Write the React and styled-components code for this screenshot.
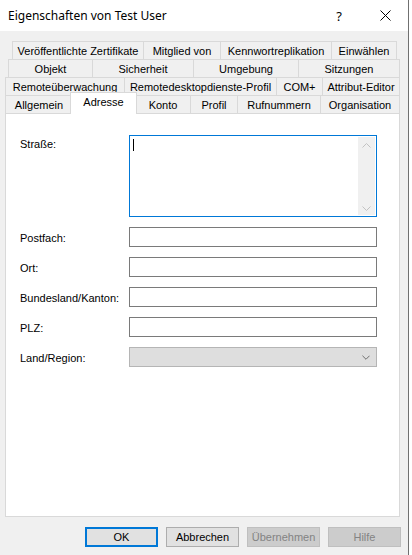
import React from "react";
import styled, { createGlobalStyle } from "styled-components";

const GlobalStyle = createGlobalStyle`
  html, body { margin: 0; padding: 0; background: #fff; }
  * { box-sizing: border-box; }
`;

const Window = styled.div`
  width: 409px;
  height: 555px;
  background: #f0f0f0;
  border-right: 1px solid #707070;
  display: flex;
  flex-direction: column;
  font-family: "Liberation Sans", Arial, sans-serif;
  font-size: 11px;
  color: #000;
  overflow: hidden;
`;

const TitleBar = styled.div`
  height: 31px;
  flex-shrink: 0;
  background: #fff;
  display: flex;
  align-items: center;
  padding-left: 8px;
`;

const Title = styled.div`
  flex: 1;
  font-family: "Noto Sans", "Open Sans", sans-serif;
  font-size: 12px;
`;

const CaptionButton = styled.div`
  width: 46px;
  height: 31px;
  display: flex;
  align-items: center;
  justify-content: center;
  font-family: "Noto Sans", sans-serif;
  font-size: 13px;
`;

const TabStrip = styled.div`
  margin-top: 10px;
  display: flex;
  flex-direction: column;
`;

const TabRow = styled.div`
  display: flex;
  align-items: flex-start;
  height: 18px;
  padding-left: ${(p) => p.$left}px;
`;

const Tab = styled.div`
  width: ${(p) => (p.$active ? p.$w + 4 : p.$w)}px;
  height: ${(p) => (p.$active ? 22 : 18)}px;
  margin: ${(p) => (p.$active ? "-3px -2px -1px" : "0")};
  border-top: 1px solid #d9d9d9;
  border-left: 1px solid #d9d9d9;
  border-right: ${(p) => (p.$active ? "1px solid #d9d9d9" : "none")};
  background: ${(p) => (p.$active ? "#fff" : "#f0f0f0")};
  position: relative;
  z-index: ${(p) => (p.$active ? 2 : 0)};
  display: flex;
  align-items: center;
  justify-content: center;
  padding-bottom: ${(p) => (p.$active ? 4 : 0)}px;
  white-space: nowrap;

  &:last-child {
    border-right: 1px solid #d9d9d9;
  }
`;

const Panel = styled.div`
  margin-left: 5px;
  width: 395px;
  height: 404px;
  flex-shrink: 0;
  background: #fff;
  border: 1px solid #d9d9d9;
  padding: 21px 0 0 14px;
`;

const Form = styled.div`
  display: grid;
  grid-template-columns: 109px 248px;
  row-gap: 10px;
  align-items: center;
`;

const Label = styled.div`
  align-self: ${(p) => (p.$top ? "start" : "center")};
  padding-top: ${(p) => (p.$top ? 3 : 1)}px;
`;

const TextArea = styled.div`
  height: 82px;
  border: 1px solid #0078d7;
  display: flex;
  padding: 1px;
`;

const TextBody = styled.div`
  flex: 1;
  padding: 2px 0 0 2px;
`;

const Caret = styled.div`
  width: 1px;
  height: 12px;
  background: #000;
`;

const ScrollBar = styled.div`
  width: 17px;
  background: #f0f0f0;
  display: flex;
  flex-direction: column;
  justify-content: space-between;
  align-items: center;
  padding: 6px 0 4px;
`;

const Input = styled.div`
  height: 20px;
  border: 1px solid #7a7a7a;
  background: #fff;
`;

const Combo = styled.div`
  height: 20px;
  border: 1px solid #b5b5b5;
  background: #dedede;
  display: flex;
  align-items: center;
  justify-content: flex-end;
  padding-right: 6px;
`;

const ButtonRow = styled.div`
  margin-top: 10px;
  display: flex;
  justify-content: flex-end;
  gap: 8px;
  padding-right: 7px;
`;

const Button = styled.div`
  width: 73px;
  height: 20px;
  display: flex;
  align-items: center;
  justify-content: center;
  background: ${(p) => (p.$disabled ? "#cccccc" : "#e1e1e1")};
  border: ${(p) =>
    p.$default ? "2px solid #0078d7" : p.$disabled ? "1px solid #bfbfbf" : "1px solid #adadad"};
  color: ${(p) => (p.$disabled ? "#838383" : "#000")};
`;

const Chevron = ({ up, color, w = 9 }) => (
  <svg width={w} height="5" viewBox="0 0 9 5">
    <polyline
      points={up ? "0.5,4.5 4.5,0.5 8.5,4.5" : "0.5,0.5 4.5,4.5 8.5,0.5"}
      fill="none"
      stroke={color}
      strokeWidth="1"
    />
  </svg>
);

const tabRows = [
  { left: 12, tabs: [["Veröffentlichte Zertifikate", 131], ["Mitglied von", 77], ["Kennwortreplikation", 111], ["Einwählen", 66]] },
  { left: 8, tabs: [["Objekt", 84], ["Sicherheit", 101], ["Umgebung", 105], ["Sitzungen", 102]] },
  { left: 5, tabs: [["Remoteüberwachung", 119], ["Remotedesktopdienste-Profil", 152], ["COM+", 46], ["Attribut-Editor", 78]] },
  { left: 5, tabs: [["Allgemein", 67], ["Adresse", 63], ["Konto", 55], ["Profil", 47], ["Rufnummern", 83], ["Organisation", 80]] },
];

const fields = ["Postfach:", "Ort:", "Bundesland/Kanton:", "PLZ:"];

export default function App() {
  return (
    <Window>
      <GlobalStyle />
      <TitleBar>
        <Title>Eigenschaften von Test User</Title>
        <CaptionButton>?</CaptionButton>
        <CaptionButton>
          <svg width="11" height="11" viewBox="0 0 11 11">
            <path d="M0.5 0.5 L10.5 10.5 M10.5 0.5 L0.5 10.5" stroke="#000" strokeWidth="1" />
          </svg>
        </CaptionButton>
      </TitleBar>

      <TabStrip>
        {tabRows.map((row, i) => (
          <TabRow key={i} $left={row.left}>
            {row.tabs.map(([name, w]) => (
              <Tab key={name} $w={w} $active={name === "Adresse"}>
                {name}
              </Tab>
            ))}
          </TabRow>
        ))}
      </TabStrip>

      <Panel>
        <Form>
          <Label $top>Straße:</Label>
          <TextArea>
            <TextBody>
              <Caret />
            </TextBody>
            <ScrollBar>
              <Chevron up color="#c2c2c2" />
              <Chevron color="#c2c2c2" />
            </ScrollBar>
          </TextArea>
          {fields.map((f) => (
            <React.Fragment key={f}>
              <Label>{f}</Label>
              <Input />
            </React.Fragment>
          ))}
          <Label>Land/Region:</Label>
          <Combo>
            <Chevron color="#606060" w={8} />
          </Combo>
        </Form>
      </Panel>

      <ButtonRow>
        <Button $default>OK</Button>
        <Button>Abbrechen</Button>
        <Button $disabled>Übernehmen</Button>
        <Button $disabled>Hilfe</Button>
      </ButtonRow>
    </Window>
  );
}
